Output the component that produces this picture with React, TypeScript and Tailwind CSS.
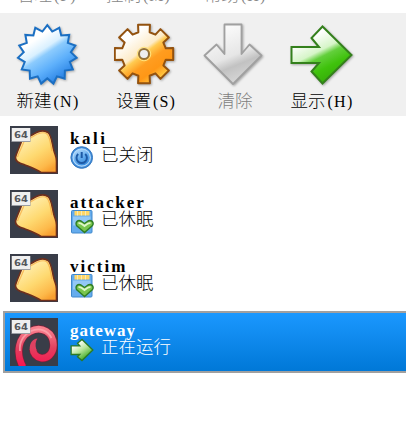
import React from "react";

const face = "font-['Liberation_Serif','Noto_Sans_CJK_SC_Light','Noto_Sans_CJK_SC',serif] font-light";

function starPoints(cx: number, cy: number, n: number, ro: number, ri: number) {
  return Array.from({ length: n * 2 }, (_, i) => {
    const a = (Math.PI * i) / n;
    const r = i % 2 ? ri : ro;
    return `${(cx + r * Math.sin(a)).toFixed(2)},${(cy - r * Math.cos(a)).toFixed(2)}`;
  }).join(" ");
}

function gearPoints(cx: number, cy: number) {
  const pts: string[] = [];
  for (let i = 0; i < 8; i++) {
    const spec: [number, number][] = [[-14.5, 22.5], [-11.5, 29.8], [11.5, 29.8], [14.5, 22.5]];
    for (const [d, r] of spec) {
      const a = ((i * 45 + d) * Math.PI) / 180;
      pts.push(`${(cx + r * Math.sin(a)).toFixed(2)},${(cy - r * Math.cos(a)).toFixed(2)}`);
    }
  }
  return pts.join(" ");
}

const shadow = "drop-shadow-[1.5px_1.5px_1px_rgba(0,0,0,0.3)]";

function NewIcon() {
  return (
    <svg width="64" height="64" viewBox="0 0 64 64" className={shadow}>
      <defs>
        <linearGradient id="nw" x1="0.17" y1="0.1" x2="0.7" y2="0.9">
          <stop offset="0.2" stopColor="#fff" />
          <stop offset="0.42" stopColor="#d9f0ff" />
          <stop offset="0.52" stopColor="#8ccbfd" />
          <stop offset="0.75" stopColor="#5eb0fb" />
          <stop offset="1" stopColor="#3189e8" />
        </linearGradient>
      </defs>
      <polygon points={starPoints(31.3, 32.7, 15, 29.5, 23.7)} fill="url(#nw)" stroke="#1b6fc3" strokeWidth="2" />
    </svg>
  );
}

function SettingsIcon() {
  return (
    <svg width="64" height="64" viewBox="0 0 64 64" className={shadow}>
      <defs>
        <linearGradient id="gr" x1="0.15" y1="0.1" x2="0.75" y2="0.9">
          <stop offset="0.15" stopColor="#fff" />
          <stop offset="0.46" stopColor="#fdebc8" />
          <stop offset="0.53" stopColor="#ffcb52" />
          <stop offset="0.68" stopColor="#ff9d20" />
          <stop offset="0.85" stopColor="#ff9716" />
          <stop offset="1" stopColor="#ffc23c" />
        </linearGradient>
      </defs>
      <polygon points={gearPoints(30, 32)} fill="url(#gr)" stroke="#93520f" strokeWidth="2" strokeLinejoin="round" />
      <circle cx="30" cy="32" r="6.8" fill="none" stroke="#ffe27c" strokeWidth="1" />
      <circle cx="30" cy="32" r="5" fill="#eee" stroke="#927138" strokeWidth="2" />
    </svg>
  );
}

function ClearIcon() {
  return (
    <svg width="64" height="64" viewBox="0 0 64 64" className={shadow}>
      <defs>
        <linearGradient id="cl" x1="0.25" y1="0.1" x2="0.6" y2="1">
          <stop offset="0" stopColor="#fafafa" />
          <stop offset="0.5" stopColor="#e6e6e6" />
          <stop offset="0.68" stopColor="#c2c2c2" />
          <stop offset="1" stopColor="#dadada" />
        </linearGradient>
      </defs>
      <path d="M21.5 2.5H38.5V32L46.5 22.5L58.5 33.5L30 62L1.5 33.5L13.5 22.5L21.5 32Z" fill="url(#cl)" stroke="#a0a0a0" strokeWidth="1.8" strokeLinejoin="round" />
    </svg>
  );
}

const arrowPath = "M1.5 25H29L21.5 16L32.5 4.5L61.5 33L32.5 61.5L21.5 49.5L29 41H1.5Z";

function ShowIcon() {
  return (
    <svg width="64" height="64" viewBox="0 0 64 64" className={shadow}>
      <defs>
        <linearGradient id="sh" x1="0.3" y1="0.1" x2="0.7" y2="0.85">
          <stop offset="0.1" stopColor="#fff" />
          <stop offset="0.43" stopColor="#d6f5c8" />
          <stop offset="0.56" stopColor="#63cf3c" />
          <stop offset="0.8" stopColor="#3fc20c" />
          <stop offset="1" stopColor="#38b20a" />
        </linearGradient>
      </defs>
      <path d={arrowPath} fill="url(#sh)" stroke="#34801c" strokeWidth="2" />
    </svg>
  );
}

function Badge64() {
  return (
    <g>
      <rect x="1.5" y="2" width="19" height="14" fill="#9b9da3" />
      <rect x="2" y="2" width="18" height="13" fill="#efefef" />
      <text x="11" y="12" textAnchor="middle" fontSize="9.5" fontWeight="bold" fill="#55575c" fontFamily="DejaVu Sans" textLength="14" lengthAdjust="spacingAndGlyphs">64</text>
    </g>
  );
}

function LinuxIcon() {
  return (
    <svg width="48" height="48" viewBox="0 0 48 48" className="shrink-0">
      <defs>
        <linearGradient id="lx" x1="0.2" y1="0.15" x2="0.75" y2="1">
          <stop offset="0" stopColor="#fff0b4" />
          <stop offset="0.5" stopColor="#fed970" />
          <stop offset="0.85" stopColor="#fdb94a" />
          <stop offset="1" stopColor="#f9a030" />
        </linearGradient>
      </defs>
      <rect width="48" height="48" fill="#393d48" />
      <path d="M5.5 31C7 26 10 20 12 14L22 9C28 5 34 3.5 38 6.5C42 10 42 18 44 25C45.5 30 46.5 31 46.5 35V46.5H31C26 43 20 41 14 38.5C8 37 5 35 5.5 31Z" fill="url(#lx)" stroke="#6e2f1c" strokeWidth="1.6" />
      <path d="M7.5 31C9 26 12 21 14 15.5L23 10.5C28 7 34 5.5 37 8C40 11 40.5 18 42 25" fill="none" stroke="#f6a63c" strokeWidth="1.2" opacity="0.7" />
      <Badge64 />
    </svg>
  );
}

const swirl = "M13 49C5 34 9 19 20 13.500C32 7 43.500 15 43.500 27C43.500 36 37 41 31 40C26 39 23 35 23 31";

function DebianIcon() {
  return (
    <svg width="48" height="48" viewBox="0 0 48 48" className="shrink-0">
      <defs>
        <linearGradient id="db" x1="0" y1="0" x2="0" y2="1">
          <stop offset="0" stopColor="#f9808e" />
          <stop offset="0.5" stopColor="#e2405f" />
          <stop offset="1" stopColor="#fb124d" />
        </linearGradient>
      </defs>
      <rect width="48" height="48" fill="#393d48" />
      <path d={swirl} fill="none" stroke="#7d1f38" strokeWidth="8" />
      <path d={swirl} fill="none" stroke="url(#db)" strokeWidth="6.6" />
      <path d="M19.700 31.500C19.500 25 22.500 21 27.500 20.500C25.500 23 25 27 26.300 31.500Z" fill="#df4161" />
      <path d="M10 33C9 24 14 17 21 13C30 9 38 13 41.500 20" fill="none" stroke="#ffa9b2" strokeWidth="1.8" opacity="0.75" />
      <Badge64 />
    </svg>
  );
}

function PowerIcon() {
  return (
    <svg width="24" height="24" viewBox="0 0 24 24">
      <defs>
        <linearGradient id="pw" x1="0.2" y1="0" x2="0.7" y2="1">
          <stop offset="0" stopColor="#b9dcfa" />
          <stop offset="0.5" stopColor="#66aeef" />
          <stop offset="1" stopColor="#3286dc" />
        </linearGradient>
      </defs>
      <circle cx="11.7" cy="11.5" r="10.8" fill="#3d8ada" stroke="#3577bd" />
      <circle cx="11.7" cy="11.5" r="8.7" fill="url(#pw)" stroke="#b4daf9" strokeWidth="1.2" />
      <path d="M11.7 6V12M8.2 8A5.2 5.2 0 1 0 15.2 8" fill="none" stroke="#1d5aa6" strokeWidth="2" />
    </svg>
  );
}

function SavedIcon() {
  return (
    <svg width="24" height="24" viewBox="0 0 24 24">
      <rect x="1.5" y="0.5" width="20.5" height="22.5" rx="1" fill="#65aced" stroke="#4088cc" />
      <rect x="3" y="6.5" width="17.5" height="9" fill="#93c8f6" />
      <path d="M4.5 1H19.5V5.5H4.5Z" fill="#ffd766" />
      <path d="M7.5 1V5.5M11.5 1V5.5M15.5 1V5.5" stroke="#f7eab7" strokeWidth="1" />
      <path d="M14.5 22.5L6.5 15.5C5 12 8 9.5 11 11L14.5 13.5L18 11C21 9.5 24.5 12 22.5 15.5Z" fill="#79c64e" stroke="#2f7d25" strokeWidth="1.4" />
      <path d="M8.5 13.5C9.5 12.5 11 13 14.5 16C18 13 19.5 12.5 20.5 13.5" fill="none" stroke="#dff6c9" strokeWidth="1.8" />
    </svg>
  );
}

function RunningIcon() {
  return (
    <svg width="24" height="24" viewBox="0 0 64 64">
      <defs>
        <linearGradient id="rn" x1="0.2" y1="0.1" x2="0.75" y2="0.9">
          <stop offset="0.1" stopColor="#fff" />
          <stop offset="0.5" stopColor="#b7e69a" />
          <stop offset="1" stopColor="#35a51a" />
        </linearGradient>
      </defs>
      <path d="M3 21H26L20 14L32 4L61 32L32 60L20 50L26 44H3Z" fill="url(#rn)" stroke="#2b7a24" strokeWidth="3.5" />
    </svg>
  );
}

function Tool({ icon, label, keyName, cls }: { icon: React.ReactNode; label: string; keyName?: string; cls: string }) {
  return (
    <div className={`flex shrink-0 flex-col items-center ${cls}`}>
      <div className="h-16 w-16">{icon}</div>
      <span className="mt-[5px] text-[17.5px] leading-5 whitespace-nowrap">
        {label}
        {keyName && <span className="pl-0.5 text-[16px] tracking-[1.2px]">{keyName}</span>}
      </span>
    </div>
  );
}

function Machine({ name, tracking, os, icon, state, selected }: { name: string; tracking: string; os: React.ReactNode; icon: React.ReactNode; state: string; selected?: boolean }) {
  const box = selected
    ? "border-[#a0a0a0] bg-linear-to-b from-[#1a98ff] to-[#0078d7] text-white"
    : "border-transparent";
  return (
    <div className={`my-px ml-[3px] flex h-[62px] items-center border-y-2 border-l-2 pl-[5px] ${box}`}>
      {os}
      <div className="ml-3 flex flex-col">
        <div className={`h-4 pt-px text-[17px] leading-4 font-bold ${tracking}`}>{name}</div>
        <div className="flex h-6 items-center gap-[7px]">
          {icon}
          <span className="-mt-1.5 text-[17.5px] leading-5">{state}</span>
        </div>
      </div>
    </div>
  );
}

export default function App() {
  return (
    <div className={`h-[427px] w-[406px] overflow-hidden bg-white text-black ${face}`}>
      <div className="flex h-[13px] items-end overflow-hidden pl-[17px] text-[17.5px] leading-5 text-[#888]">
        <span className="mb-[7px] w-[89px]">管理<span className="pl-0.5 text-[16px] tracking-[1px]">(F)</span></span>
        <span className="mb-[7px] w-[98px]">控制<span className="pl-0.5 text-[16px] tracking-[1px]">(M)</span></span>
        <span className="mb-[7px]">帮助<span className="pl-0.5 text-[16px] tracking-[1px]">(H)</span></span>
      </div>
      <div className="flex h-[103px] bg-[#f0f0f0] pt-[9px]">
        <Tool icon={<NewIcon />} label="新建" keyName="(N)" cls="w-24" />
        <Tool icon={<SettingsIcon />} label="设置" keyName="(S)" cls="w-[100px]" />
        <Tool icon={<ClearIcon />} label="清除" cls="w-[78px] text-[#808080]" />
        <Tool icon={<ShowIcon />} label="显示" keyName="(H)" cls="w-24" />
      </div>
      <div className="flex flex-col pt-0.5">
        <Machine name="kali" tracking="tracking-[2.5px]" os={<LinuxIcon />} icon={<PowerIcon />} state="已关闭" />
        <Machine name="attacker" tracking="tracking-[1.9px]" os={<LinuxIcon />} icon={<SavedIcon />} state="已休眠" />
        <Machine name="victim" tracking="tracking-[2px]" os={<LinuxIcon />} icon={<SavedIcon />} state="已休眠" />
        <Machine name="gateway" tracking="tracking-[0.9px]" os={<DebianIcon />} icon={<RunningIcon />} state="正在运行" selected />
      </div>
    </div>
  );
}
